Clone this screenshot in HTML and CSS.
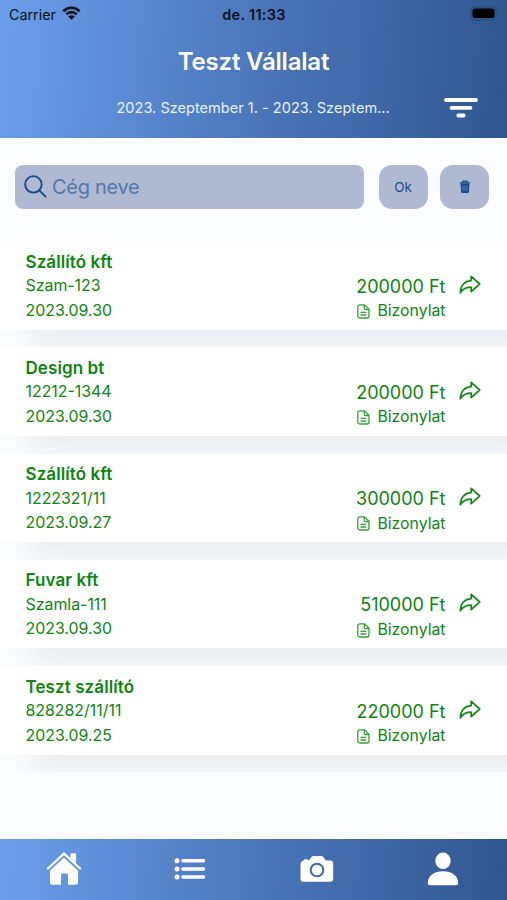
FILE: index.html
```html
<!DOCTYPE html>
<html lang="hu">
<head>
<meta charset="utf-8">
<title>Teszt Vállalat</title>
<link rel="stylesheet" href="styles.css">
</head>
<body>
<svg class="defs" aria-hidden="true">
  <symbol id="share" viewBox="0 0 22 20"><path d="M12.2 1.3 20.7 9l-8.500 7.700v-4.500C7 12.200 4.200 13.400 1.300 17.800 1.800 10.300 5.500 6.200 12.200 5.700z"/></symbol>
  <symbol id="doc" viewBox="0 0 13 15"><path d="M2.800.8h4.700l4.500 4.500v6.700a2 2 0 0 1-2 2H2.800a2 2 0 0 1-2-2V2.800a2 2 0 0 1 2-2zM7.300 1v3.300a1.200 1.200 0 0 0 1.200 1.200h3.300M3.500 8.300h5.800M3.500 11h5.800"/></symbol>
</svg>
<header class="header">
  <div class="status">
    <div class="carrier"><span>Carrier</span>
      <svg class="wifi" viewBox="0 0 19 14"><path d="M1.300 5.200c4.700-4.600 11.700-4.600 16.400 0M4.300 8.200c3-2.900 7.400-2.900 10.400 0" fill="none" stroke="#0b111b" stroke-width="2.700"/><path d="M6.200 10.600c1.900-1.800 4.700-1.800 6.600 0L9.500 13.800z" fill="#0b111b"/></svg>
    </div>
    <div class="time">de. 11:33</div>
    <svg class="battery" viewBox="0 0 30 15"><rect x=".8" y=".8" width="25" height="13" rx="4" fill="none" stroke="#294a7b" stroke-width="1.300"/><rect x="2.500" y="2.600" width="22" height="9.400" rx="2.300"/><path d="M27.500 5.500q2 2 0 4z" fill="#294a7b"/></svg>
  </div>
  <h1 class="title">Teszt Vállalat</h1>
  <div class="period">
    <span class="range">2023. Szeptember 1. - 2023. Szeptem...</span>
    <svg class="filter" viewBox="0 0 34 20"><path d="M2 2h30M7.500 9.800h19M14.300 17.500h5.400" stroke="#fff" stroke-width="3.800" stroke-linecap="round"/></svg>
  </div>
</header>
<main class="main">
  <div class="search">
    <div class="field">
      <svg class="lens" viewBox="0 0 24 24"><circle cx="9.800" cy="9.800" r="8.600"/><path d="m16 16 6.500 6.500"/></svg>
      <span class="placeholder">Cég neve</span>
    </div>
    <div class="button">Ok</div>
    <div class="button">
      <svg class="trash" viewBox="0 0 12 14"><path d="M.8 2.900h10.400M4 2.500V1.200h4v1.300" fill="none" stroke="#174a8c" stroke-width="1.300"/><path d="M1.500 3.500h9l-.6 8.400a1.200 1.200 0 0 1-1.200 1.100H3.300a1.200 1.200 0 0 1-1.200-1.100z" fill="#174a8c"/><path d="m4 5.500.2 5.500M6 5.500V11m2-5.500L7.800 11" stroke="#7890bb" stroke-width=".7"/></svg>
    </div>
  </div>
  <div class="list">
    <div class="item"><div class="card">
      <div class="info"><strong class="name">Szállító kft</strong><span>Szam-123</span><span>2023.09.30</span></div>
      <div class="sum"><span class="amount">200000 Ft</span><span class="receipt"><svg class="doc"><use href="#doc"/></svg>Bizonylat</span></div>
      <svg class="share"><use href="#share"/></svg>
    </div></div>
    <div class="item"><div class="card">
      <div class="info"><strong class="name">Design bt</strong><span>12212-1344</span><span>2023.09.30</span></div>
      <div class="sum"><span class="amount">200000 Ft</span><span class="receipt"><svg class="doc"><use href="#doc"/></svg>Bizonylat</span></div>
      <svg class="share"><use href="#share"/></svg>
    </div></div>
    <div class="item"><div class="card">
      <div class="info"><strong class="name">Szállító kft</strong><span>1222321/11</span><span>2023.09.27</span></div>
      <div class="sum"><span class="amount">300000 Ft</span><span class="receipt"><svg class="doc"><use href="#doc"/></svg>Bizonylat</span></div>
      <svg class="share"><use href="#share"/></svg>
    </div></div>
    <div class="item"><div class="card">
      <div class="info"><strong class="name">Fuvar kft</strong><span>Szamla-111</span><span>2023.09.30</span></div>
      <div class="sum"><span class="amount">510000 Ft</span><span class="receipt"><svg class="doc"><use href="#doc"/></svg>Bizonylat</span></div>
      <svg class="share"><use href="#share"/></svg>
    </div></div>
    <div class="item"><div class="card">
      <div class="info"><strong class="name">Teszt szállító</strong><span>828282/11/11</span><span>2023.09.25</span></div>
      <div class="sum"><span class="amount">220000 Ft</span><span class="receipt"><svg class="doc"><use href="#doc"/></svg>Bizonylat</span></div>
      <svg class="share"><use href="#share"/></svg>
    </div></div>
  </div>
</main>
<nav class="tabs">
  <div class="tab"><svg class="icon" viewBox="0 0 36 36"><path d="M18 6.300 32 19.500V31.500a2.300 2.300 0 0 1-2.300 2.300H22V24a1.500 1.500 0 0 0-1.500-1.500h-4A1.500 1.500 0 0 0 15 24v9.800H6.300A2.300 2.300 0 0 1 4 31.500V19.500z"/><path d="M24.500 7V3.500a1.200 1.200 0 0 1 1.200-1.200h3.200a1.200 1.200 0 0 1 1.200 1.200v9z"/><path class="eave" d="M2.500 19.700 18 5.200 33.500 19.700"/><path class="roof" d="M2 17.500 18 2.600l16 14.900"/></svg></div>
  <div class="tab"><svg class="icon" viewBox="0 0 36 36"><circle cx="5" cy="9.800" r="2.500"/><circle cx="5" cy="18" r="2.500"/><circle cx="5" cy="26" r="2.500"/><path class="bars" d="M11 9.800h20.500M11 18h20.500M11 26h20.500"/></svg></div>
  <div class="tab"><svg class="icon" viewBox="0 0 36 36"><path d="M1.500 13a3 3 0 0 1 2.500-3l1.500-1.800h3L9.800 9.500l2.500-3.300a3 3 0 0 1 2.300-1.100h7.600a3 3 0 0 1 2.300 1.100l2.300 3.300h4.400a3 3 0 0 1 3 3v15.200a3 3 0 0 1-3 3H4.500a3 3 0 0 1-3-3z"/><circle class="ring" cx="18" cy="19" r="6.300"/></svg></div>
  <div class="tab"><svg class="icon" viewBox="0 0 36 36"><ellipse cx="18" cy="9.800" rx="7.700" ry="8.300"/><path d="M2.800 32C3 24.800 9 20.300 18 20.300S33 24.800 33.200 32a2.200 2.200 0 0 1-2.200 2.300H5A2.200 2.200 0 0 1 2.800 32z"/></svg></div>
</nav>
</body>
</html>
```

FILE: styles.css
```css
* { box-sizing: border-box; }
body {
  margin: 0;
  height: 900px;
  display: flex;
  flex-direction: column;
  overflow: hidden;
  background: #fafcff;
  font-family: Inter, "Liberation Sans", sans-serif;
}
svg { display: block; flex-shrink: 0; }
.defs { width: 0; height: 0; position: absolute; }
.header, .tabs { background: linear-gradient(94deg, #6b9eeb 0%, #4b77bb 50%, #2f568f 100%); }
.header { height: 137.500px; flex-shrink: 0; color: #fff; }
.status {
  height: 28px;
  padding: 0 7px 0 9px;
  display: grid;
  grid-template-columns: 1fr auto 1fr;
  align-items: center;
  color: #0b111b;
}
.carrier { display: flex; align-items: center; gap: 6px; font-size: 14.300px; }
.wifi { width: 19px; height: 14px; margin-top: -3px; }
.time { font-size: 14.500px; font-weight: 600; letter-spacing: .3px; margin-left: -1px; }
.battery { width: 30px; height: 15px; justify-self: end; margin-top: -2px; }
.title {
  margin: 18px 0 0;
  text-align: center;
  font-size: 24px;
  line-height: 32px;
  font-weight: 600;
  letter-spacing: -.2px;
}
.period { display: flex; justify-content: flex-end; align-items: center; height: 30px; margin-top: 15px; padding-right: 29px; }
.range { font-size: 14.500px; letter-spacing: .03px; width: 274px; margin-right: 53.500px; white-space: nowrap; color: #e8f0fc; line-height: 30px; }
.filter { width: 34px; height: 20px; }
.main { height: 701px; flex-shrink: 0; padding-top: 27px; }
.search { display: flex; padding: 0 18px 0 15px; height: 44px; gap: 12px; }
.field { width: 349px; margin-right: 2.500px; background: #b0b9d2; border-radius: 8px; display: flex; align-items: center; padding-left: 8.500px; gap: 5.500px; }
.lens { width: 23px; height: 23px; fill: none; stroke: #174a8c; stroke-width: 2; stroke-linecap: round; }
.placeholder { color: #5477aa; font-size: 20px; letter-spacing: -.3px; }
.button { width: 49px; background: #b0b9d2; border-radius: 13px; display: flex; align-items: center; justify-content: center; color: #234b89; font-size: 13.500px; }
.trash { width: 12px; height: 14px; margin: 1px 0 0 1px; }
.list { padding-top: 32.500px; }
.item { height: 106.250px; padding-bottom: 17.750px; overflow: hidden; }
.card {
  height: 88.500px;
  background: #fff;
  box-shadow: 30px 15px 30px rgba(60, 65, 75, .085);
  padding: 8.500px 26px 0 25.500px;
  display: flex;
  color: #0c860f;
}
.info, .sum { display: flex; flex-direction: column; font-size: 16px; line-height: 24.500px; }
.info { flex: 1; font-size: 15.900px; }
.name { font-size: 17px; font-weight: 600; letter-spacing: .08px; }
.sum { padding-top: 25px; align-items: flex-end; }
.amount { font-size: 18px; }
.receipt { display: flex; align-items: center; gap: 7px; font-size: 15.800px; }
.doc { width: 13px; height: 15px; fill: none; stroke: #35a03b; stroke-width: 1.300; }
.share { width: 22px; height: 20px; margin: 25px 0 0 13.500px; fill: none; stroke: #138a19; stroke-width: 1.700; stroke-linejoin: round; }
.tabs { height: 62px; flex-shrink: 0; display: grid; grid-template-columns: repeat(4, 126.250px); justify-content: center; }
.tab { display: flex; justify-content: center; padding-top: 12.500px; }
.icon { width: 36px; height: 36px; fill: #fff; }
.eave { fill: none; stroke: #5e8fd8; stroke-width: 1.400; }
.roof { fill: none; stroke: #fff; stroke-width: 2.300; stroke-linecap: round; }
.bars { stroke: #fff; stroke-width: 3.600; stroke-linecap: round; }
.ring { fill: none; stroke: #4169aa; stroke-width: 2; }
```
